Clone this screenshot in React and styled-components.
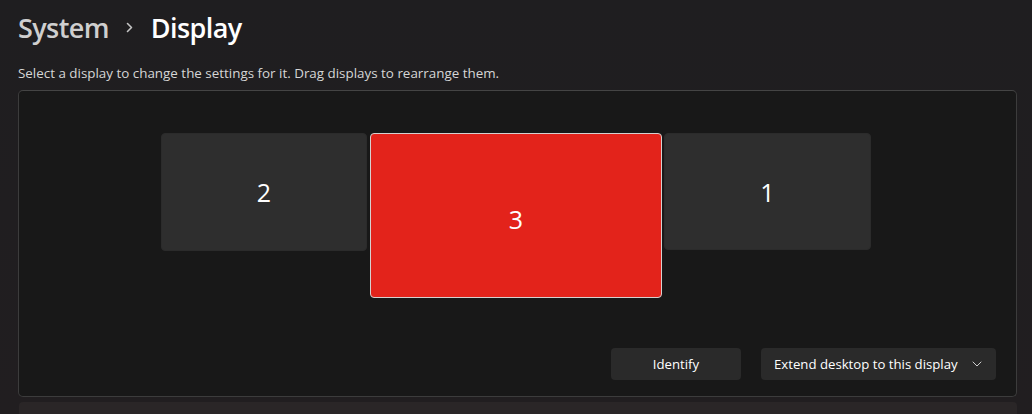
import React from 'react'
import styled, { createGlobalStyle } from 'styled-components'

const GlobalStyle = createGlobalStyle`
  html, body {
    margin: 0;
    padding: 0;
    background: #201e20;
    font-family: 'Open Sans', 'Noto Sans', sans-serif;
    color: #ffffff;
  }
`

const displays = [
  { id: 2, width: 206, height: 118 },
  { id: 3, width: 292, height: 165, active: true },
  { id: 1, width: 207, height: 117 },
]

const Page = styled.div`
  width: 1032px;
  height: 414px;
  overflow: hidden;
  padding: 0 15px 0 18px;
  box-sizing: border-box;
  background: linear-gradient(180deg, #1f1e20 0%, #211e20 100%);
`

const Breadcrumb = styled.h1`
  margin: 0;
  height: 56px;
  display: flex;
  align-items: center;
  gap: 14px;
  font-size: 27px;
  font-weight: 600;
  letter-spacing: -0.6px;
  padding-bottom: 2px;
  box-sizing: border-box;
`

const Crumb = styled.span`
  color: ${(p) => (p.current ? '#ffffff' : '#cfcfcf')};
`

const Chevron = styled.span`
  color: #bdbdbd;
  display: flex;
  align-items: center;
  width: 14px;
  justify-content: center;
`

const Hint = styled.p`
  margin: 8px 0 0;
  font-size: 13.4px;
  line-height: 18px;
  color: #d6d6d6;
`

const Panel = styled.section`
  margin-top: 8px;
  height: 307px;
  box-sizing: border-box;
  border: 1px solid #3c3c3c;
  border-top-color: #444444;
  border-radius: 5px;
  background: #181818;
  display: flex;
  flex-direction: column;
`

const Arrangement = styled.div`
  flex: 1;
  display: flex;
  align-items: flex-start;
  padding: 42px 0 0 142px;
  gap: 2px;
`

const Monitor = styled.div`
  width: ${(p) => p.w}px;
  height: ${(p) => p.h}px;
  margin-left: ${(p) => (p.active ? 1 : 0)}px;
  box-sizing: border-box;
  border-radius: 4px;
  display: flex;
  align-items: center;
  justify-content: center;
  font-size: 25px;
  font-weight: 400;
  color: #ffffff;
  background: ${(p) => (p.active ? '#e3231b' : '#2e2e2e')};
  border: 1px solid ${(p) => (p.active ? '#d6d0cf' : '#2b2b2b')};
  padding-top: ${(p) => (p.active ? 6 : 0)}px;
`

const Actions = styled.div`
  display: flex;
  justify-content: flex-end;
  gap: 20px;
  padding: 0 20px 16px 0;
`

const Button = styled.button`
  height: 32px;
  width: ${(p) => p.w}px;
  box-sizing: border-box;
  border: none;
  border-radius: 4px;
  background: #2a2a2a;
  color: #ffffff;
  font-family: inherit;
  font-size: 13.2px;
  display: flex;
  align-items: center;
  justify-content: ${(p) => (p.dropdown ? 'space-between' : 'center')};
  padding: ${(p) => (p.dropdown ? '0 14px 0 13px' : '0')};
  cursor: pointer;
`

const NextCard = styled.div`
  margin-top: 5px;
  height: 20px;
  border-radius: 4px 4px 0 0;
  background: #2a2627;
  margin-left: 1px;
`

const ChevronDown = () => (
  <svg width="10" height="6" viewBox="0 0 10 6" fill="none">
    <path d="M1 1l4 4 4-4" stroke="#cfcfcf" strokeWidth="1" strokeLinecap="round" strokeLinejoin="round" />
  </svg>
)

const ChevronRight = () => (
  <svg width="7" height="11" viewBox="0 0 7 11" fill="none">
    <path d="M1.5 1.5l4 4-4 4" stroke="#c4c4c4" strokeWidth="1.6" strokeLinecap="round" strokeLinejoin="round" />
  </svg>
)

const App = () => {
  return (
    <Page>
      <GlobalStyle />
      <Breadcrumb>
        <Crumb>System</Crumb>
        <Chevron>
          <ChevronRight />
        </Chevron>
        <Crumb current>Display</Crumb>
      </Breadcrumb>
      <Hint>Select a display to change the settings for it. Drag displays to rearrange them.</Hint>
      <Panel>
        <Arrangement>
          {displays.map((d) => (
            <Monitor key={d.id} w={d.width} h={d.height} active={d.active}>
              {d.id}
            </Monitor>
          ))}
        </Arrangement>
        <Actions>
          <Button w={130}>Identify</Button>
          <Button w={235} dropdown>
            Extend desktop to this display
            <ChevronDown />
          </Button>
        </Actions>
      </Panel>
      <NextCard />
    </Page>
  )
}

export default App
